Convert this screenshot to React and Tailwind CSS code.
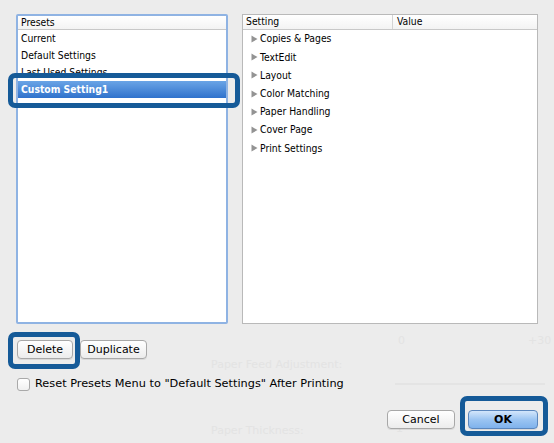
const presets = ['Current', 'Default Settings', 'Last Used Settings'];
const settings = [
  'Copies & Pages',
  'TextEdit',
  'Layout',
  'Color Matching',
  'Paper Handling',
  'Cover Page',
  'Print Settings',
];

const listFont = { fontFamily: '"DejaVu Sans Condensed", "Liberation Sans", sans-serif' };

function Disclosure() {
  return (
    <svg width="7" height="8" viewBox="0 0 7 8" className="shrink-0">
      <path d="M0.5 0.5 L6.5 4 L0.5 7.5 Z" fill="#939393" />
    </svg>
  );
}

function PushButton({ children, primary = false, className = '' }) {
  return (
    <button
      className={`h-[19px] rounded-[4px] border text-[11px] leading-none ${
        primary
          ? 'border-[#5a86bd] bg-gradient-to-b from-[#d3e6fb] via-[#9cc5f2] to-[#7fb2ec] text-black'
          : 'border-[#a8a8a8] bg-gradient-to-b from-white to-[#ececec] text-black'
      } shadow-[0_1px_0_rgba(0,0,0,0.08)] ${className}`}
    >
      {children}
    </button>
  );
}

export default function App() {
  return (
    <div
      className="relative w-[554px] h-[443px] overflow-hidden bg-[#ececec] text-black"
      style={{ fontFamily: '"DejaVu Sans", "Liberation Sans", sans-serif' }}
    >
      {/* faint controls of the window underneath the sheet */}
      <div className="absolute inset-0 text-[11px] text-[#e3e3e3] select-none">
        <span className="absolute left-[398px] top-[333px]">0</span>
        <span className="absolute left-[528px] top-[333px]">+30</span>
        <span className="absolute left-[211px] top-[357px]">Paper Feed Adjustment:</span>
        <div className="absolute left-[395px] top-[383px] w-[150px] h-[2px] bg-[#e4e4e4]" />
        <span className="absolute left-[211px] top-[423px]">Paper Thickness:</span>
        <span className="absolute left-[396px] top-[421px]">1</span>
      </div>

      <div className="relative flex flex-col px-[16px] pt-[14px]">
        {/* Lists */}
        <div className="flex gap-[14px] h-[310px]" style={listFont}>
          {/* Presets list */}
          <div className="w-[212px] h-full bg-white border-[2px] border-[#8fb3e3] rounded-[2px] flex flex-col overflow-hidden">
            <div className="h-[14px] flex items-center px-[3px] text-[10.3px] border-b border-[#c8c8c8] bg-gradient-to-b from-white to-[#f3f3f3]">
              Presets
            </div>
            {presets.map((p) => (
              <div key={p} className="h-[17px] flex items-center px-[3px] text-[10.3px]">
                {p}
              </div>
            ))}
            <div className="h-[17px] flex items-center px-[3px] text-[10.3px] font-bold text-white bg-gradient-to-b from-[#6aa4e6] to-[#2f72cc]">
              Custom Setting1
            </div>
          </div>

          {/* Setting / Value table */}
          <div className="w-[296px] h-full bg-white border border-[#b9b9b9] flex flex-col">
            <div className="h-[15px] flex text-[10.3px] border-b border-[#c8c8c8] bg-gradient-to-b from-white to-[#f3f3f3]">
              <div className="w-[150px] flex items-center px-[3px] border-r border-[#d4d4d4]">Setting</div>
              <div className="flex-1 flex items-center px-[4px]">Value</div>
            </div>
            {settings.map((s) => (
              <div key={s} className="h-[18.2px] flex items-center gap-[2px] pl-[8px] text-[10.3px]">
                <Disclosure />
                <span>{s}</span>
              </div>
            ))}
          </div>
        </div>

        {/* Preset actions */}
        <div className="flex gap-[7px] mt-[16px] ml-[1px]">
          <PushButton className="w-[56px]">Delete</PushButton>
          <PushButton className="w-[67px]">Duplicate</PushButton>
        </div>

        <label className="flex items-center gap-[5px] mt-[17px] ml-[1px] text-[11.3px]">
          <span className="w-[13px] h-[13px] rounded-[3px] border border-[#a9a9a9] bg-gradient-to-b from-white to-[#f0f0f0]" />
          <span>Reset Presets Menu to "Default Settings" After Printing</span>
        </label>

        <div className="flex justify-end gap-[13px] mt-[17px]">
          <PushButton className="w-[68px]">Cancel</PushButton>
          <PushButton primary className="w-[70px] font-semibold">OK</PushButton>
        </div>
      </div>

      {/* highlight frames */}
      <div className="absolute left-[8px] top-[73px] w-[232px] h-[35px] rounded-[7px] border-[5px] border-[#155a98]" />
      <div className="absolute left-[8px] top-[332px] w-[72px] h-[37px] rounded-[7px] border-[5px] border-[#155a98]" />
      <div className="absolute left-[460px] top-[396px] w-[88px] h-[40px] rounded-[7px] border-[5px] border-[#155a98]" />
    </div>
  );
}
